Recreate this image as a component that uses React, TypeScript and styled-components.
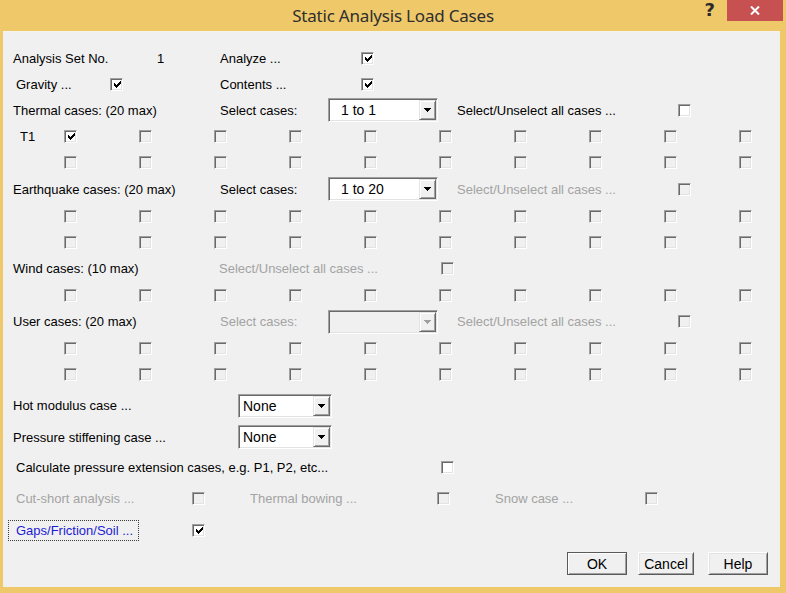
import React from "react";
import styled, { createGlobalStyle } from "styled-components";

const Global = createGlobalStyle`
  html, body { margin: 0; padding: 0; }
  body {
    width: 786px; height: 593px; overflow: hidden;
    font-family: "Liberation Sans", Arial, sans-serif;
  }
`;

const Frame = styled.div`
  width: 786px;
  height: 593px;
  box-sizing: border-box;
  background: #efc86a;
  display: flex;
  flex-direction: column;
  padding: 0 6px 6px 3px;
`;

const TitleBar = styled.div`
  height: 32px;
  flex: none;
  margin: 0 -6px 0 -3px;
  display: grid;
  grid-template-columns: 1fr auto 1fr;
`;

const TitleText = styled.div`
  grid-column: 2;
  align-self: center;
  font-family: "Noto Sans", "Open Sans", sans-serif;
  font-size: 17px;
  letter-spacing: -0.2px;
  color: #2e2e2e;
  padding-bottom: 1px;
`;

const Caption = styled.div`
  grid-column: 3;
  display: flex;
  justify-content: flex-end;
  align-items: flex-start;
  padding-right: 3px;
`;

const HelpGlyph = styled.div`
  font-family: "DejaVu Sans", sans-serif;
  font-weight: bold;
  font-size: 18px;
  line-height: 19px;
  color: #2a2a2a;
  margin-right: 12px;
`;

const CloseBtn = styled.div`
  width: 56px;
  height: 21px;
  background: #c75050;
  display: flex;
  align-items: center;
  justify-content: center;
`;

const Client = styled.div`
  flex: 1;
  background: #f0f0f0;
  display: flex;
  flex-direction: column;
  padding: 13px 12px 0 10px;
  font-size: 13px;
  color: #000;
  border-top: 1px solid #f7f3ea;
  margin-top: -1px;
`;

const Row = styled.div<{ $h: number; $cols: string }>`
  height: ${(p) => p.$h}px;
  flex: none;
  display: grid;
  grid-template-columns: ${(p) => p.$cols};
  align-items: center;
`;

const Label = styled.span<{ $dim?: boolean; $indent?: number }>`
  white-space: nowrap;
  color: ${(p) => (p.$dim ? "#a3a3a3" : "#000")};
  padding-left: ${(p) => p.$indent ?? 0}px;
  line-height: 15px;
`;

const FocusLabel = styled.span`
  display: flex;
  align-items: center;
  box-sizing: border-box;
  margin-left: -5px;
  width: 131px;
  height: 21px;
  padding-left: 7px;
  border: 1px dotted #3a3a3a;
  color: #1c1cd6;
  white-space: nowrap;
`;

const Box = styled.span<{ $disabled?: boolean }>`
  width: 13px;
  height: 13px;
  box-sizing: border-box;
  display: inline-flex;
  align-items: center;
  justify-content: center;
  background: ${(p) => (p.$disabled ? "#f0f0f0" : "#fff")};
  border-top: 1px solid #a0a0a0;
  border-left: 1px solid #a0a0a0;
  border-right: 1px solid #fff;
  border-bottom: 1px solid #fff;
  box-shadow: inset 1px 1px 0 #696969, inset -1px -1px 0 #e3e3e3;
`;

const CheckBox = ({ checked, disabled }: { checked?: boolean; disabled?: boolean }) => (
  <Box $disabled={disabled}>
    {checked && (
      <svg width="7" height="7" viewBox="0 0 7 7" shapeRendering="crispEdges" style={{ marginLeft: 1, marginTop: 1 }}>
        <path d="M0 2h1v1h1v1h1V3h1V2h1V1h1V0h1v3H6v1H5v1H4v1H3v1H2V6H1V5H0z" fill="#000" />
      </svg>
    )}
  </Box>
);

const ComboShell = styled.div<{ $w: number; $disabled?: boolean }>`
  width: ${(p) => p.$w}px;
  height: 24px;
  box-sizing: border-box;
  display: flex;
  align-items: stretch;
  background: ${(p) => (p.$disabled ? "#f0f0f0" : "#fff")};
  border-top: 1px solid #a0a0a0;
  border-left: 1px solid #a0a0a0;
  border-right: 1px solid #fff;
  border-bottom: 1px solid #fff;
  box-shadow: inset 1px 1px 0 #696969, inset -1px -1px 0 #e3e3e3;
  padding: 1px;
`;

const ComboText = styled.span<{ $indent: number }>`
  flex: 1;
  display: flex;
  align-items: center;
  padding-left: ${(p) => p.$indent}px;
  white-space: nowrap;
  font-size: 14px;
`;

const DropBtn = styled.span<{ $disabled?: boolean }>`
  width: 17px;
  box-sizing: border-box;
  background: #f0f0f0;
  display: flex;
  align-items: center;
  justify-content: center;
  border-top: 1px solid #e3e3e3;
  border-left: 1px solid #e3e3e3;
  border-right: 1px solid #696969;
  border-bottom: 1px solid #696969;
  box-shadow: inset 1px 1px 0 #fff, inset -1px -1px 0 #a0a0a0;
  svg path { fill: ${(p) => (p.$disabled ? "#a0a0a0" : "#000")}; }
`;

const Combo = ({ w, text, indent, disabled }: { w: number; text?: string; indent: number; disabled?: boolean }) => (
  <ComboShell $w={w} $disabled={disabled}>
    <ComboText $indent={indent}>{text}</ComboText>
    <DropBtn $disabled={disabled}>
      <svg width="7" height="4" viewBox="0 0 7 4" shapeRendering="crispEdges">
        <path d="M0 0h7v1H6v1H5v1H4v1H3V3H2V2H1V1H0z" />
      </svg>
    </DropBtn>
  </ComboShell>
);

const ButtonBar = styled.div`
  display: flex;
  justify-content: flex-end;
  margin-top: 4px;
`;

const DlgButton = styled.button<{ $w: number; $gap: number; $default?: boolean }>`
  width: ${(p) => p.$w}px;
  height: 23px;
  margin-left: ${(p) => p.$gap}px;
  box-sizing: border-box;
  font-family: "Liberation Sans", Arial, sans-serif;
  font-size: 14px;
  color: #000;
  padding: 0;
  background: #f0f0f0;
  border-top: 1px solid ${(p) => (p.$default ? "#5a5a5a" : "#fff")};
  border-left: 1px solid ${(p) => (p.$default ? "#5a5a5a" : "#fff")};
  border-right: 1px solid #5a5a5a;
  border-bottom: 1px solid #5a5a5a;
  box-shadow: ${(p) =>
    p.$default
      ? "inset 1px 1px 0 #fff, inset -1px -1px 0 #a0a0a0"
      : "inset 1px 1px 0 #e3e3e3, inset -1px -1px 0 #a0a0a0"};
`;

const GRID_COLS = "51px repeat(9, 75px) auto";

const CaseRow = ({ first, checkedFirst, firstDisabled }: { first?: string; checkedFirst?: boolean; firstDisabled?: boolean }) => (
  <Row $h={26} $cols={GRID_COLS}>
    <Label $indent={7}>{first}</Label>
    {Array.from({ length: 10 }).map((_, i) => (
      <CheckBox key={i} checked={i === 0 && checkedFirst} disabled={i === 0 ? firstDisabled : true} />
    ))}
  </Row>
);

export default function App() {
  return (
    <>
      <Global />
      <Frame>
        <TitleBar>
          <TitleText>Static Analysis Load Cases</TitleText>
          <Caption>
            <HelpGlyph>?</HelpGlyph>
            <CloseBtn>
              <svg width="10" height="9" viewBox="0 0 10 9">
                <path d="M1 0.5 L9 8.5 M9 0.5 L1 8.5" stroke="#fff" strokeWidth="2" />
              </svg>
            </CloseBtn>
          </Caption>
        </TitleBar>
        <Client>
          <Row $h={26} $cols="144px 63px 141px auto">
            <Label>Analysis Set No.</Label>
            <Label>1</Label>
            <Label>Analyze ...</Label>
            <CheckBox checked />
          </Row>
          <Row $h={26} $cols="97px 110px 141px auto">
            <Label $indent={3}>Gravity ...</Label>
            <CheckBox checked />
            <Label>Contents ...</Label>
            <CheckBox checked />
          </Row>
          <Row $h={26} $cols="207px 108px 129px 221px auto">
            <Label>Thermal cases: (20 max)</Label>
            <Label>Select cases:</Label>
            <Combo w={110} text="1 to 1" indent={11} />
            <Label>Select/Unselect all cases ...</Label>
            <CheckBox />
          </Row>
          <CaseRow first="T1" checkedFirst />
          <CaseRow firstDisabled />
          <Row $h={28} $cols="207px 108px 129px 221px auto">
            <Label>Earthquake cases: (20 max)</Label>
            <Label>Select cases:</Label>
            <Combo w={110} text="1 to 20" indent={11} />
            <Label $dim>Select/Unselect all cases ...</Label>
            <CheckBox disabled />
          </Row>
          <CaseRow firstDisabled />
          <CaseRow firstDisabled />
          <Row $h={27} $cols="206px 222px auto">
            <Label>Wind cases: (10 max)</Label>
            <Label $dim>Select/Unselect all cases ...</Label>
            <CheckBox disabled />
          </Row>
          <CaseRow firstDisabled />
          <Row $h={27} $cols="207px 108px 129px 221px auto">
            <Label>User cases: (20 max)</Label>
            <Label $dim>Select cases:</Label>
            <Combo w={110} indent={11} disabled />
            <Label $dim>Select/Unselect all cases ...</Label>
            <CheckBox disabled />
          </Row>
          <CaseRow firstDisabled />
          <CaseRow firstDisabled />
          <Row $h={37} $cols="225px auto">
            <Label>Hot modulus case ...</Label>
            <Combo w={94} text="None" indent={3} />
          </Row>
          <Row $h={26} $cols="225px auto">
            <Label>Pressure stiffening case ...</Label>
            <Combo w={94} text="None" indent={3} />
          </Row>
          <Row $h={34} $cols="428px auto">
            <Label $indent={3}>Calculate pressure extension cases, e.g. P1, P2, etc...</Label>
            <CheckBox />
          </Row>
          <Row $h={28} $cols="179px 58px 187px 58px 150px auto">
            <Label $dim $indent={3}>Cut-short analysis ...</Label>
            <CheckBox disabled />
            <Label $dim>Thermal bowing ...</Label>
            <CheckBox disabled />
            <Label $dim>Snow case ...</Label>
            <CheckBox disabled />
          </Row>
          <Row $h={36} $cols="179px auto">
            <FocusLabel>Gaps/Friction/Soil ...</FocusLabel>
            <CheckBox checked />
          </Row>
          <ButtonBar>
            <DlgButton $w={60} $gap={0} $default>OK</DlgButton>
            <DlgButton $w={56} $gap={11}>Cancel</DlgButton>
            <DlgButton $w={60} $gap={14}>Help</DlgButton>
          </ButtonBar>
        </Client>
      </Frame>
    </>
  );
}
